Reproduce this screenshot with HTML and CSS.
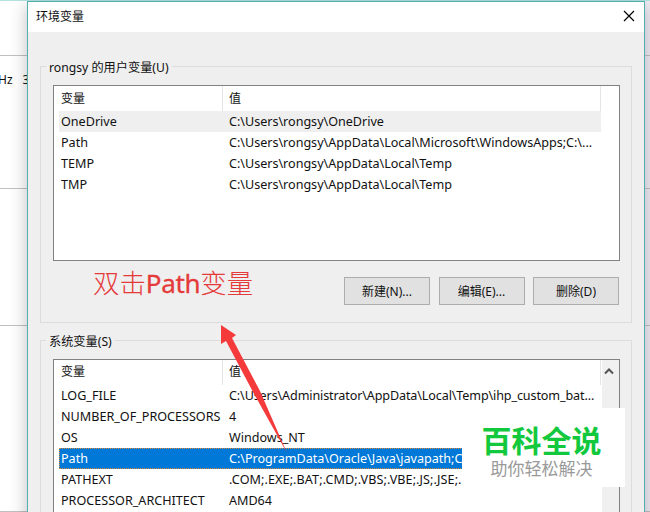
FILE: index.html
```html
<!DOCTYPE html>
<html lang="zh-CN">
<head>
<meta charset="utf-8">
<title>环境变量</title>
<link rel="stylesheet" href="styles.css">
</head>
<body>
<div class="desktop">
  <div class="behind">
    <div class="band band-a"></div>
    <div class="band band-b"><span class="hz">Hz</span><span class="hz">3</span></div>
    <div class="band band-c"></div>
    <div class="band band-d"></div>
  </div>
  <div class="dialog">
    <header class="titlebar">
      <span class="title">环境变量</span>
      <svg class="close" width="12" height="12" viewBox="0 0 12 12"><path d="M1 1L11 11M11 1L1 11" stroke="#000" stroke-width="1.2" fill="none"/></svg>
    </header>
    <section class="group user">
      <div class="legend"><span>rongsy 的用户变量(U)</span></div>
      <div class="list">
        <div class="head"><span>变量</span><span>值</span></div>
        <div class="row hover"><span>OneDrive</span><span>C:\Users\rongsy\OneDrive</span></div>
        <div class="row"><span>Path</span><span>C:\Users\rongsy\AppData\Local\Microsoft\WindowsApps;C:\...</span></div>
        <div class="row"><span>TEMP</span><span>C:\Users\rongsy\AppData\Local\Temp</span></div>
        <div class="row"><span>TMP</span><span>C:\Users\rongsy\AppData\Local\Temp</span></div>
      </div>
      <div class="actions">
        <button>新建(N)...</button><button>编辑(E)...</button><button>删除(D)</button>
      </div>
    </section>
    <section class="group system">
      <div class="legend"><span>系统变量(S)</span></div>
      <div class="list scroll">
        <div class="rows">
          <div class="head"><span>变量</span><span>值</span></div>
          <div class="row"><span>LOG_FILE</span><span class="tight">C:\Users\Administrator\AppData\Local\Temp\ihp_custom_bat...</span></div>
          <div class="row"><span>NUMBER_OF_PROCESSORS</span><span>4</span></div>
          <div class="row"><span>OS</span><span>Windows_NT</span></div>
          <div class="row selected"><span>Path</span><span>C:\ProgramData\Oracle\Java\javapath;C</span></div>
          <div class="row"><span>PATHEXT</span><span class="loose">.COM;.EXE;.BAT;.CMD;.VBS;.VBE;.JS;.JSE;.</span></div>
          <div class="row"><span>PROCESSOR_ARCHITECT</span><span>AMD64</span></div>
        </div>
        <div class="scrollbar"><svg width="10" height="7" viewBox="0 0 10 7"><path d="M1 5.5L5 1.5L9 5.5" stroke="#555" stroke-width="2" fill="none"/></svg></div>
      </div>
    </section>
  </div>
  <div class="note">双击<b>Path</b>变量</div>
  <svg class="arrow" width="650" height="512" viewBox="0 0 650 512"><path d="M221 325L236 335L232 338L260 391L287 453L253 392L226 341L221 344Z" fill="#f43a3a"/></svg>
  <div class="watermark"><strong>百科全说</strong><span>助你轻松解决</span></div>
</div>
</body>
</html>
```
FILE: styles.css
```css
* { box-sizing: border-box; }
body { margin: 0; font: 12.6px/21px "Noto Sans", "Noto Sans CJK SC", sans-serif; color: #111; }
.desktop { position: relative; width: 650px; height: 512px; overflow: hidden; background: #fff; }
.behind { height: 512px; border-top: 1px solid #b5e3e1; background: linear-gradient(90deg, #fff 50%, #f1ecf5 50%); }
.band { border-bottom: 1px solid #c0c0c0; }
.band-a { height: 55px; }
.band-b { display: flex; gap: 12px; height: 133px; padding-top: 13px; }
.band-c { height: 137px; }
.band-d { height: 186px; }
.hz { font-size: 12px; margin-left: -2px; }
.dialog { position: absolute; left: 27px; top: 1px; width: 618px; height: 530px; padding: 0 12px; background: #efefef; border: 1px solid #4fb0ad; box-shadow: 0 4px 16px 0 rgba(40, 40, 45, .3); }
.titlebar { display: flex; justify-content: space-between; align-items: center; height: 30px; margin: 0 -12px; padding: 0 9px 0 8px; background: #fff; }
.title { font-size: 12px; line-height: 18px; }
.close { margin-top: -2px; }
.group { border: 1px solid #dcdcdc; padding: 0 12px; width: 592px; }
.user { height: 257px; margin-top: 34px; }
.system { height: 200px; margin-top: 17px; }
.legend { height: 18px; margin-left: -7px; line-height: 0; }
.legend span { display: inline-block; padding: 0 3px; background: #efefef; line-height: 20px; margin-top: -9px; font-size: 12.2px; }
.list { width: 567px; height: 176px; padding-left: 5px; border: 1px solid #828282; background: #fff; }
.head, .row { display: grid; grid-template-columns: 164px 378px; width: 542px; white-space: nowrap; }
.head { height: 25px; line-height: 25px; font-size: 12px; }
.head span { border-right: 1px solid #e5e5e5; padding-left: 2px; }
.head span + span { padding-left: 6px; }
.row { height: 21px; line-height: 22px; }
.row span { padding-left: 2px; justify-self: start; }
.row span + span { padding-left: 6px; letter-spacing: -.02px; }
.row span.tight { letter-spacing: -.13px; }
.row span.loose { letter-spacing: .09px; }
.hover { background: #efefef; }
.selected { background: #0078d7; color: #fff; outline: 1px dotted #d98b3c; outline-offset: -1px; }
.scroll { display: flex; }
.scroll .head { line-height: 24px; }
.scrollbar { width: 17px; margin-left: 1px; background: #f0f0f0; padding-left: 2px; }
.actions { display: flex; gap: 8.5px; width: 566px; justify-content: flex-end; padding: 16px 0 0; }
button { width: 86px; height: 28px; padding: 0 0 1px; border: 1px solid #adadad; background: #e1e1e1; color: #111; font: 12px "Noto Sans", "Noto Sans CJK SC", sans-serif; }
.note { position: absolute; left: 93px; top: 264px; font: 300 26.4px/36px "Noto Sans CJK SC", sans-serif; color: #e53a3a; white-space: nowrap; }
.note b { font: 400 26px "Noto Sans", sans-serif; letter-spacing: -.3px; -webkit-text-stroke: .3px #e53a3a; }
.arrow { position: absolute; left: 0; top: 0; }
.watermark { position: absolute; left: 462px; top: 408px; width: 163px; height: 79px; padding-right: 4px; background: #fff; display: flex; flex-direction: column; align-items: center; font-family: "Noto Sans CJK SC", sans-serif; }
.watermark strong { font-size: 30px; line-height: 34px; margin-top: 14px; color: #12c83c; }
.watermark span { font-size: 17px; line-height: 23px; color: #999; }
```
